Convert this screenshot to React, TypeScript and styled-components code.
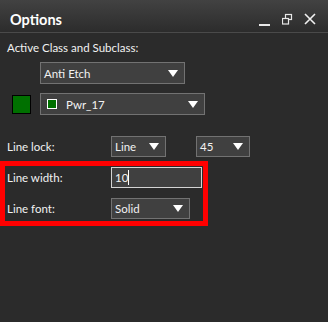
import React from "react";
import styled, { createGlobalStyle } from "styled-components";

const Global = createGlobalStyle`
  html, body { margin: 0; padding: 0; background: #2b2b2b; }
  body { font-family: Lato, "Noto Sans", sans-serif; font-size: 11.5px; color: #f2f2f2; }
  * { box-sizing: border-box; }
`;

const Panel = styled.div`
  width: 328px;
  height: 322px;
  background: #2b2b2b;
  display: flex;
  flex-direction: column;
`;

const TitleBar = styled.div`
  height: 33px;
  flex: none;
  display: flex;
  align-items: center;
  justify-content: space-between;
  padding: 7px 12px 0 10px;
  background: linear-gradient(#424242, #2c2c2c);
  border-bottom: 1px solid #4a4a4a;
`;

const Title = styled.div`
  font-family: Lato, "Open Sans", sans-serif;
  font-weight: 700;
  font-size: 14.5px;
  color: #ffffff;
`;

const TitleButtons = styled.div`
  display: flex;
  align-items: center;
  gap: 11px;
  height: 100%;
`;

const Content = styled.div`
  display: flex;
  flex-direction: column;
  padding-left: 7px;
`;

const Caption = styled.div`
  height: 16px;
  line-height: 16px;
  margin-top: 7px;
`;

const Row = styled.div<{ $top: number; $h?: number }>`
  display: flex;
  align-items: center;
  margin-top: ${(p) => p.$top}px;
  height: ${(p) => p.$h ?? 22}px;
`;

const Select = styled.div<{ $w: number; $h?: number; $pad?: number }>`
  width: ${(p) => p.$w}px;
  height: ${(p) => p.$h ?? 22}px;
  background: #404040;
  border: 1px solid #727272;
  display: flex;
  align-items: center;
  justify-content: space-between;
  padding: 0 6px 0 ${(p) => p.$pad ?? 3}px;
  flex: none;
  color: #f2f2f2;
`;

const Arrow = styled.span`
  width: 0;
  height: 0;
  border-left: 5.5px solid transparent;
  border-right: 5.5px solid transparent;
  border-top: 7px solid #ffffff;
`;

const Swatch = styled.div<{ $hidden?: boolean }>`
  width: 19px;
  height: 19px;
  background: #007000;
  border: 1px solid #000;
  margin-left: 5px;
  margin-right: 9px;
  visibility: ${(p) => (p.$hidden ? "hidden" : "visible")};
`;

const MiniSwatch = styled.span`
  width: 10px;
  height: 10px;
  background: #007000;
  border: 1px solid #ffffff;
  margin-right: 9px;
  flex: none;
`;

const ItemLabel = styled.span`
  display: flex;
  align-items: center;
`;

const Label = styled.div`
  width: 104px;
  flex: none;
`;

const Highlight = styled.div`
  margin-top: 4px;
  margin-left: -7px;
  width: 208px;
  border: 5px solid #ff0000;
  padding: 1px 0 2px 2px;
  display: flex;
  flex-direction: column;
`;

const Input = styled.div`
  width: 91px;
  height: 21px;
  background: #404040;
  border: 1px solid #d4d4d4;
  display: flex;
  align-items: center;
  padding-left: 3px;
`;

const Caret = styled.span`
  width: 1px;
  height: 15px;
  background: #ffffff;
`;

const Gap = styled.div<{ $w: number }>`
  width: ${(p) => p.$w}px;
  flex: none;
`;

export default function App() {
  return (
    <>
      <Global />
      <Panel>
        <TitleBar>
          <Title>Options</Title>
          <TitleButtons>
            <svg width="12" height="20" viewBox="0 0 12 20">
              <rect x="0" y="14" width="11" height="2" fill="#e8e8e8" />
            </svg>
            <svg width="11" height="20" viewBox="0 0 11 20">
              <rect x="3.5" y="4.5" width="6" height="5" fill="none" stroke="#e8e8e8" strokeWidth="1.2" />
              <rect x="0.5" y="8.5" width="6" height="5.5" fill="#343434" stroke="#e8e8e8" strokeWidth="1.2" />
            </svg>
            <svg width="12" height="20" viewBox="0 0 12 20">
              <path d="M1 4 L11 14 M11 4 L1 14" stroke="#f0f0f0" strokeWidth="1.6" />
            </svg>
          </TitleButtons>
        </TitleBar>
        <Content>
          <Caption>Active Class and Subclass:</Caption>
          <Row $top={6}>
            <Swatch $hidden />
            <Select $w={145}>
              <span>Anti Etch</span>
              <Arrow />
            </Select>
          </Row>
          <Row $top={9}>
            <Swatch />
            <Select $w={165} $pad={6}>
              <ItemLabel>
                <MiniSwatch />
                Pwr_17
              </ItemLabel>
              <Arrow />
            </Select>
          </Row>
          <Row $top={21} $h={21}>
            <Label>Line lock:</Label>
            <Select $w={55} $h={21}>
              <span>Line</span>
              <Arrow />
            </Select>
            <Gap $w={30} />
            <Select $w={54} $h={21}>
              <span>45</span>
              <Arrow />
            </Select>
          </Row>
          <Highlight>
            <Row $top={0} $h={21}>
              <Label>Line width:</Label>
              <Input>
                10
                <Caret />
              </Input>
            </Row>
            <Row $top={10} $h={21}>
              <Label>Line font:</Label>
              <Select $w={79} $h={21}>
                <span>Solid</span>
                <Arrow />
              </Select>
            </Row>
          </Highlight>
        </Content>
      </Panel>
    </>
  );
}
